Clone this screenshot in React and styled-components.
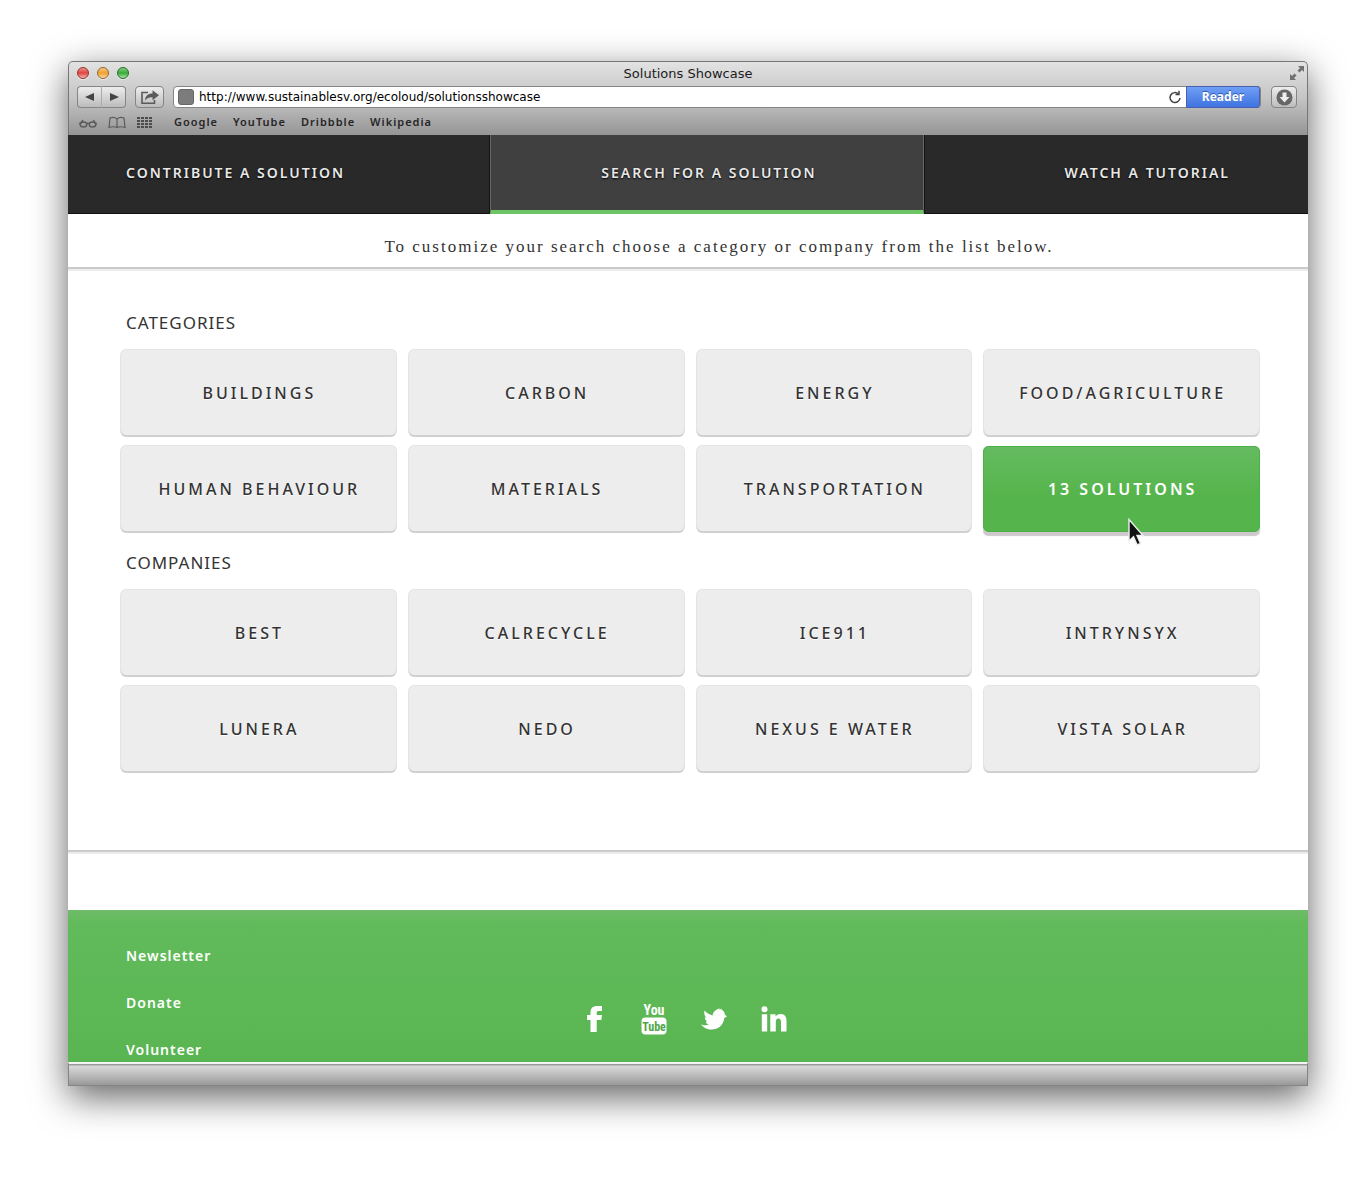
import React from "react";
import styled, { createGlobalStyle } from "styled-components";

const GlobalStyle = createGlobalStyle`
  *, *::before, *::after { box-sizing: border-box; }
  body { margin: 0; background: #fff; font-family: "Noto Sans", "Open Sans", sans-serif; color: #333; }
  button, input { font: inherit; color: inherit; }
  a { color: inherit; text-decoration: none; }
  ul { list-style: none; margin: 0; padding: 0; }
  h1, h2, p { margin: 0; font-weight: 400; }
`;

const Desktop = styled.div`
  padding: 61px 60px 102px 68px;
`;

const Window = styled.div`
  border-radius: 5px 5px 0 0;
  background: #fff;
  box-shadow: 0 11px 36px rgba(0, 0, 0, 0.62);
`;

const Chrome = styled.header`
  border: solid #777;
  border-width: 1px 1px 0;
  border-radius: 5px 5px 0 0;
  background: linear-gradient(#e2e2e2, #c4c4c4 50%, #959595);
  font-size: 12px;
  color: #1c1c1c;
`;

const TitleBar = styled.div`
  display: grid;
  grid-template-columns: 1fr auto 1fr;
  align-items: center;
  height: 22px;
  padding: 0 2px;
`;

const Title = styled.h1`
  font-family: "DejaVu Sans", sans-serif;
  font-size: 13px;
`;

const Lights = styled.div`
  display: flex;
  gap: 8px;
  padding-left: 6px;
`;

const Light = styled.button`
  width: 12px;
  height: 12px;
  padding: 0;
  border: 1px solid ${(p) => p.$edge};
  border-radius: 50%;
  background: linear-gradient(#fff6, transparent 50%, #fff9), ${(p) => p.$fill};
  box-shadow: 0 1px 0 #fff8;
`;

const Expand = styled.button`
  justify-self: end;
  display: flex;
  padding: 0;
  border: 0;
  background: none;
`;

const Toolbar = styled.div`
  display: flex;
  align-items: center;
  height: 26px;
  padding: 0 10px 0 8px;
`;

const ChromeButton = styled.button`
  display: flex;
  align-items: center;
  justify-content: center;
  width: ${(p) => p.$width}px;
  height: 22px;
  padding: 0;
  border: 1px solid #858585;
  border-radius: ${(p) => p.$radius || "4px"};
  background: linear-gradient(#ededed, #bcbcbc);
  color: #444;
`;

const Pair = styled.div`
  display: flex;
  margin-right: 9px;
  & > button:first-child { border-right-color: #aaa; }
  & > button:last-child { border-left: 0; }
`;

const Address = styled.form`
  display: flex;
  flex: 1;
  align-items: center;
  height: 22px;
  margin: 0 10px 0 9px;
  border: 1px solid #858585;
  border-radius: 4px 3px 3px 4px;
  background: #fff;
`;

const SiteIcon = styled.span`
  width: 16px;
  height: 16px;
  margin: 0 5px 0 4px;
  border: 1px solid #666;
  border-radius: 3px;
  background: #7c7c7c;
`;

const Url = styled.input`
  flex: 1;
  min-width: 0;
  height: 20px;
  padding: 0;
  border: 0;
  outline: 0;
  background: none;
  font-family: "DejaVu Sans", sans-serif;
  font-size: 12px;
  color: #000;
`;

const Reload = styled.button`
  display: flex;
  margin-right: 4px;
  padding: 0;
  border: 0;
  background: none;
`;

const Reader = styled.button`
  width: 74px;
  height: 22px;
  padding: 0;
  border: 1px solid #4a5fae;
  border-radius: 0 3px 3px 0;
  background: linear-gradient(#6f9ff5, #3f73e0);
  color: #fff;
  font-size: 12px;
  font-weight: 700;
  line-height: 16px;
  text-shadow: 0 -1px 0 #3058b0;
`;

const Bookmarks = styled.nav`
  display: flex;
  align-items: center;
  height: 25px;
  padding: 0 9px 2px;
  font-size: 11px;
  font-weight: 600;
  letter-spacing: 1px;
  color: #262626;
`;

const BookmarkTools = styled.div`
  display: flex;
  gap: 10px;
  margin-right: 21px;
`;

const ToolIcon = styled.button`
  display: flex;
  padding: 0;
  border: 0;
  background: none;
`;

const BookmarkLinks = styled.div`
  display: flex;
  gap: 15px;
`;

const Tabs = styled.nav`
  display: grid;
  grid-template-columns: 422fr 434fr 384fr;
  height: 79px;
  background: #292929;
`;

const Tab = styled.a`
  display: flex;
  align-items: center;
  justify-content: ${(p) => p.$align || "center"};
  padding: 0 78px 3px 58px;
  border-bottom: 1px solid #111;
  color: #e8e8e8;
  font-size: 14px;
  font-weight: 600;
  letter-spacing: 2px;
  text-shadow: 0 1px 2px #000;

  &[aria-current] {
    padding: 0 0 0 4px;
    border: solid #666;
    border-width: 0 1px;
    border-bottom: 4px solid #6cc664;
    background: #404040;
    box-shadow: -1px 0 0 #151515, 1px 0 0 #151515;
  }
`;

const Intro = styled.p`
  padding: 21px 0 8px 62px;
  color: #333;
  font-family: "Liberation Serif", serif;
  font-size: 17px;
  line-height: 24px;
  letter-spacing: 2px;
  text-align: center;
`;

const Rule = styled.hr`
  height: 4px;
  margin: 0;
  border: 0;
  background: linear-gradient(#cacaca 50%, #ececec 50%);
`;

const Content = styled.main`
  padding: 40px 48px 77px 52px;
`;

const Group = styled.section`
  & + & { margin-top: 18px; }
`;

const Heading = styled.h2`
  padding: 0 6px;
  font-size: 17px;
  line-height: 24px;
  letter-spacing: 1px;
`;

const Grid = styled.div`
  display: grid;
  grid-template-columns: repeat(4, 1fr);
  gap: 8px 11px;
  margin-top: 14px;
`;

const Tile = styled.button`
  position: relative;
  height: 88px;
  padding: 0 0 2px 2px;
  border: 1px solid #e4e4e4;
  border-bottom: 0;
  border-radius: 6px;
  background: #ededed;
  box-shadow: inset 0 -2px 0 #d0d0d0;
  font-size: 16px;
  font-weight: 500;
  letter-spacing: 3px;
  text-shadow: 0 1px 0 #fff;
  cursor: pointer;

  ${(p) => p.$active && `
    align-self: center;
    height: 86px;
    padding-bottom: 0;
    border: 1px solid #4eb048;
    border-radius: 5px;
    background: linear-gradient(#65bb5f, #55b44b 60%);
    box-shadow: 0 4px 1px #ccc8cc;
    color: #fff;
    font-weight: 600;
    text-shadow: none;
  `}
`;

const Pointer = styled.svg`
  position: absolute;
  top: 71px;
  left: 52%;
`;

const Footer = styled.footer`
  display: grid;
  grid-template-columns: 1fr auto 1fr;
  margin-top: 56px;
  padding: 34px 66px 0 58px;
  background: linear-gradient(#6fbb69, #62bb5b 13px, #59b551);
  color: #fff;
`;

const FooterLinks = styled.ul`
  display: flex;
  flex-direction: column;
  gap: 23px;
  font-size: 14px;
  font-weight: 600;
  line-height: 24px;
  letter-spacing: 1px;
`;

const Social = styled.div`
  display: flex;
  align-items: center;
  gap: 32px;
  padding-top: 32px;
  align-self: center;
  & > a { display: flex; justify-content: center; width: 28px; }
`;

const StatusBar = styled.div`
  height: 24px;
  border: 1px solid #858585;
  border-top: 2px solid #f4f4f4;
  background: linear-gradient(#9a9a9a 1px, #dadada 2px, #999);
`;

const categories = ["BUILDINGS", "CARBON", "ENERGY", "FOOD/AGRICULTURE", "HUMAN BEHAVIOUR", "MATERIALS", "TRANSPORTATION", "13 SOLUTIONS"];
const companies = ["BEST", "CALRECYCLE", "ICE911", "INTRYNSYX", "LUNERA", "NEDO", "NEXUS E WATER", "VISTA SOLAR"];
const bookmarks = ["Google", "YouTube", "Dribbble", "Wikipedia"];

const LogoText = styled.text`
  font-family: "Liberation Sans Narrow", "Roboto Condensed", "DejaVu Sans Condensed", sans-serif;
  font-size: ${(p) => p.$size}px;
  font-weight: 700;
  text-anchor: middle;
`;

function FacebookIcon() {
  return (
    <svg width="15" height="26" viewBox="0 0 15 26" fill="currentColor" aria-hidden="true">
      <path d="M3.500 26V14H0V9H3.500V6.500C3.500 2 6 0 10.500 0H15V5H12C10.300 5 9.700 5.600 9.700 7V9H15L14.300 14H9.700V26Z" />
    </svg>
  );
}

function YouTubeIcon() {
  return (
    <svg width="28" height="43" viewBox="-1 -6 28 43" fill="currentColor" aria-hidden="true">
      <LogoText x="13" y="11" $size={14}>You</LogoText>
      <rect x="0.500" y="13.500" width="25" height="17" rx="4" />
      <LogoText x="13" y="26.500" $size={12} fill="#4fa648">Tube</LogoText>
    </svg>
  );
}

function TwitterIcon() {
  return (
    <svg width="26" height="22" viewBox="0 0 26 22" fill="currentColor" aria-hidden="true">
      <path d="M3.500 2.500C6 5.500 9 6.500 11.500 7.500C12 4 14.500 1.500 18.500 0.300L18.300 1.500L21 0.800L20.500 2C22.500 2.500 23.500 4 23.800 6.500L26 8.500L23.300 10C22.500 17 17.500 21.500 10.500 21.500C6 21.500 2.500 20 0 16C1.500 17.500 5.500 17.800 7.800 16.500C6 16 5 15 4.800 13.500H6.500C4.800 12.500 3.700 11 3.700 9.200L5.500 9.700C3.500 8 2.800 5.500 3.500 2.500Z" />
    </svg>
  );
}

function LinkedInIcon() {
  return (
    <svg width="26" height="26" viewBox="0 0 26 26" fill="currentColor" aria-hidden="true">
      <circle cx="3.500" cy="3.200" r="3" />
      <path d="M0.800 8.300H6.200V25.500H0.800ZM9.300 8.300H14.500V10.500C15.600 8.700 17.400 7.900 19.500 7.900C24 7.900 25.500 10.800 25.500 15V25.500H20V16C20 13.800 19.200 12.600 17.500 12.600C15.600 12.600 14.800 14 14.800 16V25.500H9.300Z" />
    </svg>
  );
}

function Cursor() {
  return (
    <Pointer width="18" height="30" viewBox="0 0 18 30" aria-hidden="true">
      <path d="M2 1.500V23L6.500 18.800L10.200 27L13.500 25.500L10 17.500H16Z" fill="#111" stroke="#eee" strokeWidth="1.400" />
    </Pointer>
  );
}

function TileGroup({ title, items, active }) {
  return (
    <Group>
      <Heading>{title}</Heading>
      <Grid>
        {items.map((name) => (
          <Tile key={name} type="button" $active={name === active}>
            {name}
            {name === active && <Cursor />}
          </Tile>
        ))}
      </Grid>
    </Group>
  );
}

function BrowserChrome() {
  return (
    <Chrome>
      <TitleBar>
        <Lights>
          <Light aria-label="Close" $fill="#e0443c" $edge="#8c3a36" />
          <Light aria-label="Minimize" $fill="#f0a030" $edge="#8f6630" />
          <Light aria-label="Zoom" $fill="#35ac35" $edge="#2c6c2c" />
        </Lights>
        <Title>Solutions Showcase</Title>
        <Expand aria-label="Full screen">
          <svg width="16" height="16" viewBox="0 0 16 16" fill="#707070">
            <path d="M9 1H15V7L13 5L10.500 7.500L8.500 5.500L11 3ZM7 15H1V9L3 11L5.500 8.500L7.500 10.500L5 13Z" />
          </svg>
        </Expand>
      </TitleBar>
      <Toolbar>
        <Pair>
          <ChromeButton $width={25} $radius="4px 0 0 4px" aria-label="Back">
            <svg width="10" height="10" viewBox="0 0 10 10" fill="#444"><path d="M0 5L9 1V9Z" /></svg>
          </ChromeButton>
          <ChromeButton $width={24} $radius="0 4px 4px 0" aria-label="Forward">
            <svg width="10" height="10" viewBox="0 0 10 10" fill="#444"><path d="M10 5L1 1V9Z" /></svg>
          </ChromeButton>
        </Pair>
        <ChromeButton $width={29} aria-label="Share">
          <svg width="20" height="16" viewBox="0 0 20 16" fill="none" stroke="#5a5a5a" strokeWidth="1.600">
            <path d="M8 3.500H2V14.200H14.500V11" />
            <path d="M5 11.500C5.300 7 8 4.500 12.500 4.500V1.300L19 6.300L12.500 11.300V8.300C9 8.200 7 9.200 5 11.500Z" fill="#5a5a5a" stroke="none" />
          </svg>
        </ChromeButton>
        <Address onSubmit={(e) => e.preventDefault()}>
          <SiteIcon />
          <Url aria-label="Address" defaultValue="http://www.sustainablesv.org/ecoloud/solutionsshowcase" />
          <Reload type="button" aria-label="Reload">
            <svg width="14" height="14" viewBox="0 0 14 14" fill="none" stroke="#444" strokeWidth="1.500">
              <path d="M10.500 4A5 5 0 1 0 12 8" />
              <path d="M7.500 4.500H11V.8" />
            </svg>
          </Reload>
          <Reader type="button">Reader</Reader>
        </Address>
        <ChromeButton $width={26} aria-label="Downloads">
          <svg width="17" height="17" viewBox="0 0 17 17">
            <circle cx="8.500" cy="8.500" r="8" fill="#666" />
            <path d="M6.500 3.500H10.500V8H13.500L8.500 13.500L3.500 8H6.500Z" fill="#eee" />
          </svg>
        </ChromeButton>
      </Toolbar>
      <Bookmarks aria-label="Bookmarks">
        <BookmarkTools>
          <ToolIcon aria-label="Reading list">
            <svg width="20" height="14" viewBox="0 0 20 14" fill="none" stroke="#5c5c5c" strokeWidth="1.400">
              <ellipse cx="5.500" cy="9.500" rx="3.300" ry="2.500" />
              <ellipse cx="14.500" cy="9.500" rx="3.300" ry="2.500" />
              <path d="M8.600 8.800Q10 7.800 11.400 8.800M1 8.500H2.500L5 5M17.500 8.500H19M17.500 8.500L15.500 5" />
            </svg>
          </ToolIcon>
          <ToolIcon aria-label="Bookmarks">
            <svg width="18" height="14" viewBox="0 0 18 14" fill="none" stroke="#5c5c5c" strokeWidth="1.200">
              <path d="M9 4Q6 1.500 2 3L1 12.500Q5.500 11 9 12.500Q12.500 11 17 12.500L16 3Q12 1.500 9 4V12.500" />
            </svg>
          </ToolIcon>
          <ToolIcon aria-label="Top sites">
            <svg width="17" height="14" viewBox="0 0 17 14" fill="#4c4c4c">
              {[0, 1, 2, 3].flatMap((r) => [0, 1, 2, 3].map((c) => (
                <rect key={`${r}-${c}`} x={1 + c * 4} y={2 + r * 3} width="3" height="2" />
              )))}
            </svg>
          </ToolIcon>
        </BookmarkTools>
        <BookmarkLinks>
          {bookmarks.map((name) => <a key={name} href="#">{name}</a>)}
        </BookmarkLinks>
      </Bookmarks>
    </Chrome>
  );
}

export default function App() {
  return (
    <>
      <GlobalStyle />
      <Desktop>
        <Window>
          <BrowserChrome />
          <Tabs aria-label="Main">
            <Tab href="#" $align="flex-start">CONTRIBUTE A SOLUTION</Tab>
            <Tab href="#" aria-current="page">SEARCH FOR A SOLUTION</Tab>
            <Tab href="#" $align="flex-end">WATCH A TUTORIAL</Tab>
          </Tabs>
          <Intro>To customize your search choose a category or company from the list below.</Intro>
          <Rule />
          <Content>
            <TileGroup title="CATEGORIES" items={categories} active="13 SOLUTIONS" />
            <TileGroup title="COMPANIES" items={companies} />
          </Content>
          <Rule />
          <Footer>
            <FooterLinks>
              <li><a href="#">Newsletter</a></li>
              <li><a href="#">Donate</a></li>
              <li><a href="#">Volunteer</a></li>
            </FooterLinks>
            <Social>
              <a href="#" aria-label="Facebook"><FacebookIcon /></a>
              <a href="#" aria-label="YouTube"><YouTubeIcon /></a>
              <a href="#" aria-label="Twitter"><TwitterIcon /></a>
              <a href="#" aria-label="LinkedIn"><LinkedInIcon /></a>
            </Social>
          </Footer>
          <StatusBar />
        </Window>
      </Desktop>
    </>
  );
}
